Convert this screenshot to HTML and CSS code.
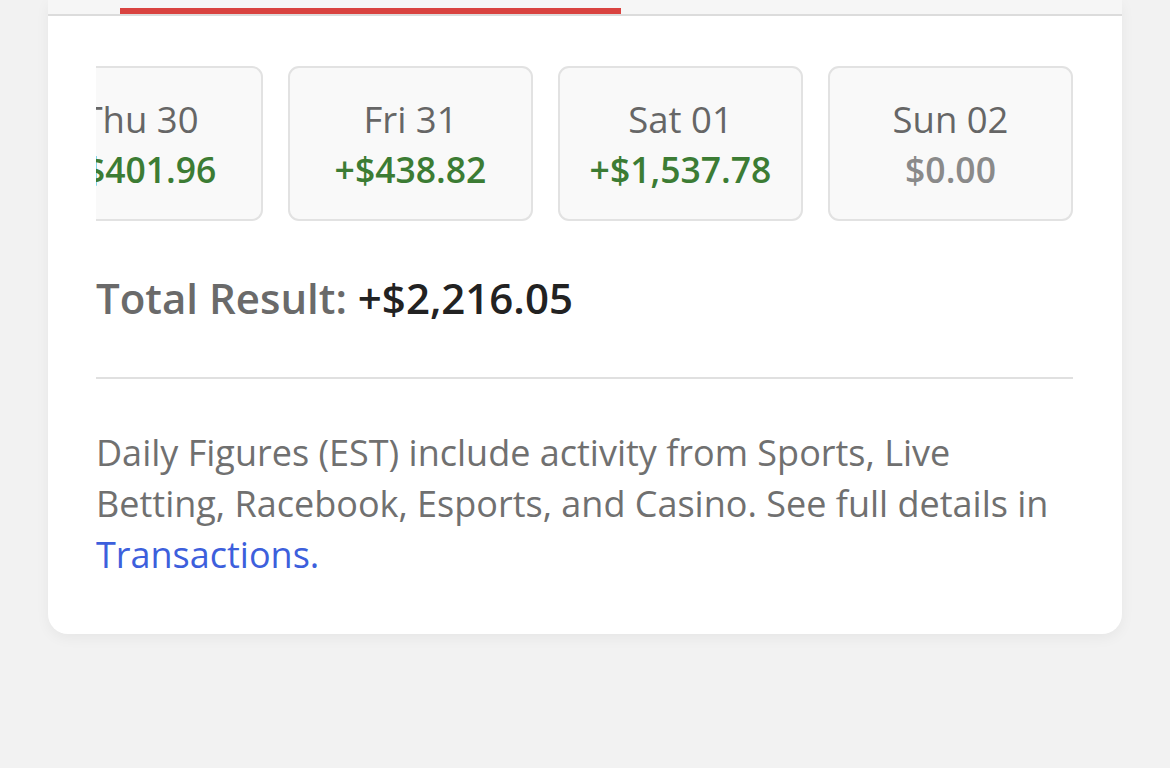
FILE: index.html
```html
<!DOCTYPE html>
<html lang="en">
<head>
<meta charset="utf-8">
<title>Daily Figures</title>
<link rel="stylesheet" href="styles.css">
</head>
<body>
<div class="page">
  <section class="card">
    <div class="tabs">
      <div class="tab-indicator"></div>
    </div>
    <div class="content">
      <div class="days">
        <div class="days-track">
          <div class="day"><div class="day-name">Thu 30</div><div class="day-amount pos">+$401.96</div></div>
          <div class="day"><div class="day-name">Fri 31</div><div class="day-amount pos">+$438.82</div></div>
          <div class="day"><div class="day-name">Sat 01</div><div class="day-amount pos">+$1,537.78</div></div>
          <div class="day"><div class="day-name">Sun 02</div><div class="day-amount zero">$0.00</div></div>
        </div>
      </div>
      <div class="total"><span class="total-label">Total Result:</span> <span class="total-value">+$2,216.05</span></div>
      <hr class="divider">
      <p class="note">Daily Figures (EST) include activity from Sports, Live Betting, Racebook, Esports, and Casino. See full details in <a class="link" href="#">Transactions.</a></p>
    </div>
  </section>
</div>
</body>
</html>
```

FILE: styles.css
```css
* { box-sizing: border-box; }
html, body { margin: 0; padding: 0; }
body {
  background: #f2f2f2;
  font-family: "Open Sans", "Noto Sans", sans-serif;
  width: 1170px;
  height: 768px;
  overflow: hidden;
}
.page { padding: 0 48px; }
.card {
  background: #ffffff;
  border-radius: 0 0 20px 20px;
  box-shadow: 0 4px 14px rgba(0,0,0,0.05);
  padding-bottom: 54px;
}
.tabs {
  height: 16px;
  background: #f6f6f6;
  border-bottom: 2px solid #dcdcdc;
  position: relative;
}
.tab-indicator {
  position: absolute;
  left: 72px;
  width: 501px;
  top: 8px;
  height: 6px;
  background: #d94340;
}
.content { padding: 0 49px 0 48px; }
.days {
  margin-top: 50px;
  overflow: hidden;
}
.days-track {
  display: flex;
  gap: 25px;
  margin-left: -78px;
}
.day {
  flex: 0 0 245px;
  height: 155px;
  border: 2px solid #e2e2e2;
  border-radius: 11px;
  background: #f9f9f9;
  display: flex;
  flex-direction: column;
  align-items: center;
  justify-content: center;
  gap: 2px;
}
.day-name {
  font-size: 36.5px;
  line-height: 48px;
  font-weight: 500;
  color: #666666;
}
.day-amount {
  font-size: 35.5px;
  line-height: 48px;
  font-weight: 600;
}
.pos { color: #3c7c34; }
.zero { color: #8a8a8a; }
.total {
  margin-top: 49px;
  font-size: 42px;
  line-height: 56px;
  font-weight: 600;
}
.total-label { color: #6a6a6a; }
.total-value { color: #222222; }
.divider {
  margin: 51px 0 0 0;
  border: 0;
  height: 2px;
  background: #e0e0e0;
}
.note {
  margin: 48px 0 0 0;
  font-size: 36px;
  line-height: 51px;
  color: #707070;
}
.link { color: #3d5fdc; text-decoration: none; }
```
